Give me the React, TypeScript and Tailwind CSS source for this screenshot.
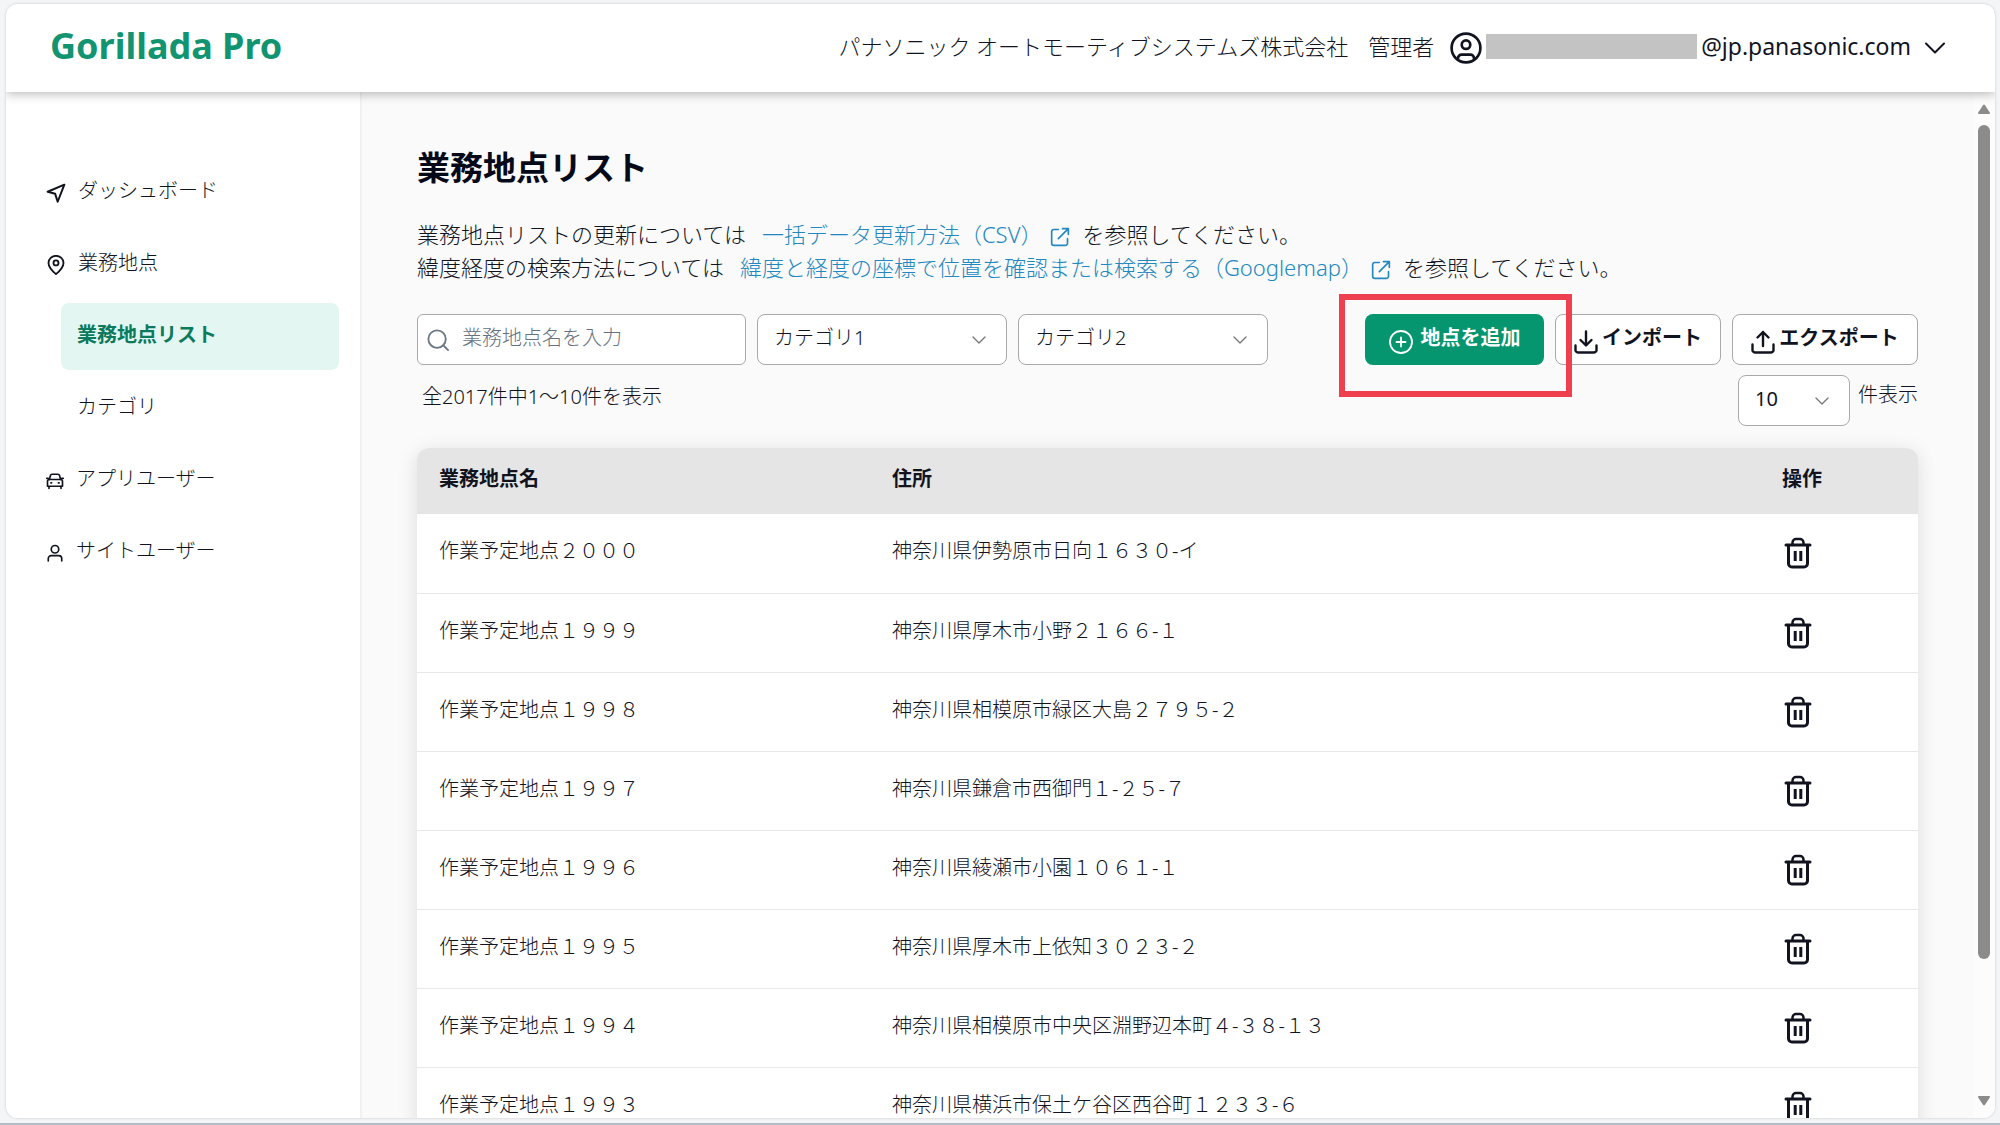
import type { ReactNode } from "react";

type IconProps = { className?: string };

function Svg({ className, children, width = 2 }: IconProps & { children: ReactNode; width?: number }) {
  return (
    <svg
      className={className}
      viewBox="0 0 24 24"
      fill="none"
      stroke="currentColor"
      strokeWidth={width}
      strokeLinecap="round"
      strokeLinejoin="round"
      aria-hidden="true"
    >
      {children}
    </svg>
  );
}

const PlaneIcon = ({ className }: IconProps) => (
  <Svg className={className} width={2.4}>
    <path d="M22 2 2 10.5 11 13 14 22.5Z" />
  </Svg>
);

const PinIcon = ({ className }: IconProps) => (
  <Svg className={className} width={2.2}>
    <path d="M21 9.5C21 15 16 19.500 12 23 8 19.500 3 15 3 9.500a9 8.500 0 0 1 18 0Z" />
    <circle cx="12" cy="9.500" r="3" />
  </Svg>
);

const CarIcon = ({ className }: IconProps) => (
  <Svg className={className} width={2.2}>
    <path d="M4.500 10 6 4.500Q6.500 3 8 3h8q1.500 0 2 1.500L19.500 10" />
    <path d="M2 19v-6.500Q2 10 4.500 10h15q2.500 0 2.500 2.500V19Z" />
    <path d="M4 19.500V22M20 19.500V22M1 8.500h2M21 8.500h2" />
    <path d="M6.500 14.500h1M16.500 14.500h1" />
  </Svg>
);

const PersonIcon = ({ className }: IconProps) => (
  <Svg className={className} width={2.2}>
    <circle cx="12" cy="7" r="5" />
    <path d="M3 22.500v-3a4 4 0 0 1 4-4h10a4 4 0 0 1 4 4v3" />
  </Svg>
);

const AccountIcon = ({ className }: IconProps) => (
  <Svg className={className}>
    <circle cx="12" cy="12" r="10.800" />
    <circle cx="12" cy="9.500" r="3.200" />
    <path d="M6 20.500v-.8A2.700 2.700 0 0 1 8.700 17h6.600a2.700 2.700 0 0 1 2.700 2.700v.8" />
  </Svg>
);

const SearchIcon = ({ className }: IconProps) => (
  <Svg className={className}>
    <circle cx="11" cy="11" r="9.500" />
    <path d="m18 18 5 5" />
  </Svg>
);

const ChevronIcon = ({ className }: IconProps) => (
  <Svg className={className}>
    <path d="m3 7.500 9 9 9-9" />
  </Svg>
);

const ExternalIcon = ({ className }: IconProps) => (
  <Svg className={className}>
    <path d="M10 3H4.500A2.500 2.500 0 0 0 2 5.500v14A2.500 2.500 0 0 0 4.500 22h14a2.500 2.500 0 0 0 2.500-2.500V14" />
    <path d="M15 2h7v7M22 2 10 14" />
  </Svg>
);

const PlusCircleIcon = ({ className }: IconProps) => (
  <Svg className={className} width={1.800}>
    <circle cx="12" cy="12" r="11" />
    <path d="M12 7.500v9M7.500 12h9" />
  </Svg>
);

const ImportIcon = ({ className }: IconProps) => (
  <Svg className={className} width={2.400}>
    <path d="M12 1.500V15M6.500 10l5.500 5.500 5.500-5.500" />
    <path d="M1.500 15.500v4A2.500 2.500 0 0 0 4 22.500h16a2.500 2.500 0 0 0 2.500-3v-4" />
  </Svg>
);

const ExportIcon = ({ className }: IconProps) => (
  <Svg className={className} width={2.400}>
    <path d="M12 16V2M6.500 7.500 12 2l5.500 5.500" />
    <path d="M1.500 14.500v5A2.500 2.500 0 0 0 4 22.500h16a2.500 2.500 0 0 0 2.500-3v-5" />
  </Svg>
);

function TrashIcon() {
  return (
    <svg
      className="h-8 w-7"
      viewBox="0 0 28 32"
      fill="none"
      stroke="currentColor"
      strokeWidth="3"
      strokeLinecap="round"
      strokeLinejoin="round"
      aria-hidden="true"
    >
      <path d="M2 8h24M4.500 8v18.500A3.500 3.500 0 0 0 8 30h12a3.500 3.500 0 0 0 3.500-3.500V8" />
      <path d="M8.500 7.500V5.500A3.500 3.500 0 0 1 12 2h4a3.500 3.500 0 0 1 3.500 3.500v2" strokeWidth="2.500" />
      <path d="M11.200 14v10M16.800 14v10" strokeLinecap="butt" strokeWidth="3" />
    </svg>
  );
}

function NavItem({
  label,
  icon,
  active = false,
}: {
  label: string;
  icon?: ReactNode;
  active?: boolean;
}) {
  return (
    <li>
      <a
        href="#"
        aria-current={active ? "page" : undefined}
        className={
          active
            ? "flex h-[67px] items-center rounded-lg bg-[#e3f6f2] pb-1 pl-4 font-bold text-[#0c7a5c]"
            : icon
              ? "flex h-[67px] items-center gap-3 pl-10"
              : "flex h-[67px] items-center pb-1 pl-4"
        }
      >
        {icon}
        <span className={icon ? "pb-1" : ""}>{label}</span>
      </a>
    </li>
  );
}

function SelectBox({ label, options, className }: { label: string; options: string[]; className: string }) {
  return (
    <div className={className}>
      <select
        aria-label={label}
        className="h-[51px] w-full appearance-none rounded-lg border border-[#a9a9a9] bg-white pr-10 pb-1 pl-4"
      >
        {options.map((option) => (
          <option key={option}>{option}</option>
        ))}
      </select>
      <ChevronIcon className="pointer-events-none absolute top-1/2 right-5 size-4 -translate-y-1/2 text-[#777777]" />
    </div>
  );
}

function DocLink({ children }: { children: ReactNode }) {
  return (
    <a href="#" className="mr-3 ml-4 inline-flex items-center gap-2 text-[#2488c0]">
      {children}
      <ExternalIcon className="mt-1 size-5" />
    </a>
  );
}

const rows = [
  ["作業予定地点２０００", "神奈川県伊勢原市日向１６３０-イ"],
  ["作業予定地点１９９９", "神奈川県厚木市小野２１６６-１"],
  ["作業予定地点１９９８", "神奈川県相模原市緑区大島２７９５-２"],
  ["作業予定地点１９９７", "神奈川県鎌倉市西御門１-２５-７"],
  ["作業予定地点１９９６", "神奈川県綾瀬市小園１０６１-１"],
  ["作業予定地点１９９５", "神奈川県厚木市上依知３０２３-２"],
  ["作業予定地点１９９４", "神奈川県相模原市中央区淵野辺本町４-３８-１３"],
  ["作業予定地点１９９３", "神奈川県横浜市保土ケ谷区西谷町１２３３-６"],
];

function Header() {
  return (
    <header className="relative z-10 flex h-[88px] shrink-0 items-center justify-between bg-white pr-12 pb-1 pl-11 shadow-[0_2px_10px_rgba(0,0,0,0.28)]">
      <a href="#" className="text-[36px] leading-10 font-bold text-[#129471]">
        Gorillada Pro
      </a>
      <div className="flex items-center text-[22px] leading-8">
        <span>パナソニック オートモーティブシステムズ株式会社</span>
        <span className="ml-5">管理者</span>
        <button type="button" aria-label="アカウントメニュー" className="ml-4 flex items-center">
          <AccountIcon className="mt-1 size-8" />
          <span className="ml-1 h-[25px] w-[211px] bg-[#c3c3c3]" />
          <span className="ml-1 text-[23px] font-normal">@jp.panasonic.com</span>
          <ChevronIcon className="mt-1 ml-3 size-6" />
        </button>
      </div>
    </header>
  );
}

function Sidebar() {
  return (
    <nav aria-label="メイン" className="w-[356px] shrink-0 border-r-2 border-[#f1f1f1] bg-white pt-[67px] pr-[21px]">
      <ul className="flex flex-col gap-[5px]">
        <NavItem label="ダッシュボード" icon={<PlaneIcon className="size-5" />} />
        <NavItem label="業務地点" icon={<PinIcon className="size-5" />} />
        <li>
          <ul className="ml-[55px] flex flex-col gap-[5px]">
            <NavItem label="業務地点リスト" active />
            <NavItem label="カテゴリ" />
          </ul>
        </li>
        <NavItem label="アプリユーザー" icon={<CarIcon className="size-[18px]" />} />
        <NavItem label="サイトユーザー" icon={<PersonIcon className="size-[18px]" />} />
      </ul>
    </nav>
  );
}

function Toolbar() {
  return (
    <div className="mt-[30px] flex gap-[11px]">
      <label className="relative w-[329px]">
        <SearchIcon className="absolute top-[15px] left-[10px] size-[22px] text-[#6b7785]" />
        <input
          type="text"
          aria-label="業務地点名"
          placeholder="業務地点名を入力"
          className="h-[51px] w-full rounded-md border border-[#a9a9a9] bg-white pr-3 pb-1 pl-11 placeholder:text-[#66717f]"
        />
      </label>
      <SelectBox label="カテゴリ1" options={["カテゴリ1"]} className="relative w-[250px]" />
      <SelectBox label="カテゴリ2" options={["カテゴリ2"]} className="relative w-[250px]" />
      <div className="relative ml-auto">
        <button
          type="button"
          className="flex h-[51px] w-[179px] items-center justify-center gap-2 rounded-lg bg-[#05966f] font-bold text-white"
        >
          <PlusCircleIcon className="mt-1 size-6" />
          <span className="pb-1">地点を追加</span>
        </button>
        <span className="pointer-events-none absolute -top-5 -right-7 -bottom-8 -left-[26px] z-10 border-[6px] border-[#ef404f]" />
      </div>
      <button
        type="button"
        className="flex h-[51px] w-[166px] items-center justify-center gap-1 rounded-lg border border-[#a9a9a9] bg-white font-bold"
      >
        <ImportIcon className="mt-1 size-6" />
        <span className="pb-1">インポート</span>
      </button>
      <button
        type="button"
        className="flex h-[51px] w-[186px] items-center justify-center gap-1 rounded-lg border border-[#a9a9a9] bg-white font-bold"
      >
        <ExportIcon className="mt-1 size-6" />
        <span className="pb-1">エクスポート</span>
      </button>
    </div>
  );
}

function PlacesTable() {
  return (
    <div className="mt-[22px] shrink-0 overflow-hidden rounded-t-xl bg-white shadow-[0_4px_20px_rgba(0,0,0,0.12)]">
      <table className="w-full table-fixed border-collapse text-left">
        <colgroup>
          <col className="w-[453px]" />
          <col />
          <col className="w-[160px]" />
        </colgroup>
        <thead>
          <tr className="h-[66px] bg-[#e5e5e5]">
            <th className="pb-1 pl-[22px]">業務地点名</th>
            <th className="pb-1 pl-[22px]">住所</th>
            <th className="pb-1 pl-6">操作</th>
          </tr>
        </thead>
        <tbody>
          {rows.map(([name, address]) => (
            <tr key={name} className="h-[79px] border-b border-[#e8e8e8]">
              <td className="pb-1 pl-[22px]">{name}</td>
              <td className="pb-1 pl-[22px]">{address}</td>
              <td className="pl-[26px]">
                <button type="button" aria-label={`${name}を削除`} className="block">
                  <TrashIcon />
                </button>
              </td>
            </tr>
          ))}
        </tbody>
      </table>
    </div>
  );
}

function Scrollbar() {
  return (
    <div aria-hidden="true" className="flex w-[22px] shrink-0 flex-col items-center bg-[#fcfcfc] pt-3 pb-3 text-[#8b8b8b]">
      <svg className="h-[10px] w-3" viewBox="0 0 12 10" fill="currentColor">
        <path d="M5 1.200a1.200 1.200 0 0 1 2 0l4.800 7.300a1 1 0 0 1-.8 1.500H1a1 1 0 0 1-.8-1.500Z" />
      </svg>
      <div className="mt-[11px] mb-3 w-3 flex-1">
        <div className="h-[87%] rounded-full bg-[#8b8b8b]" />
      </div>
      <svg className="h-[10px] w-3" viewBox="0 0 12 10" fill="currentColor">
        <path d="M5 8.800a1.200 1.200 0 0 0 2 0l4.800-7.300A1 1 0 0 0 11 0H1a1 1 0 0 0-.8 1.500Z" />
      </svg>
    </div>
  );
}

export default function App() {
  return (
    <div className="flex h-screen flex-col border-b-2 border-[#b4bbc5] bg-[#f4f5f6] pt-1 pr-[5px] pb-[5px] pl-[6px] font-['Noto_Sans','Noto_Sans_CJK_JP',sans-serif] text-[20px] leading-7 font-light text-[#11141f]">
      <div className="flex min-h-0 flex-1 flex-col overflow-hidden rounded-xl bg-[#fafafa] shadow-[0_0_3px_rgba(0,0,0,0.18)]">
        <Header />
        <div className="flex min-h-0 flex-1">
          <Sidebar />
          <main className="flex min-w-0 flex-1 flex-col overflow-hidden pt-[52px] pr-[55px] pl-[55px]">
            <h1 className="text-[33px] leading-12 font-bold text-[#060a18]">業務地点リスト</h1>
            <div className="mt-[26px] text-[22px] leading-[33px]">
              <p className="flex items-center">
                業務地点リストの更新については
                <DocLink>一括データ更新方法（CSV）</DocLink>
                を参照してください。
              </p>
              <p className="flex items-center">
                緯度経度の検索方法については
                <DocLink>緯度と経度の座標で位置を確認または検索する（Googlemap）</DocLink>
                を参照してください。
              </p>
            </div>
            <Toolbar />
            <div className="mt-[10px] flex items-start justify-between">
              <p className="mt-2 pl-[5px]">全2017件中1～10件を表示</p>
              <label className="flex gap-2">
                <SelectBox label="表示件数" options={["10"]} className="relative w-[112px] font-normal" />
                <span className="mt-[6px]">件表示</span>
              </label>
            </div>
            <PlacesTable />
          </main>
          <Scrollbar />
        </div>
      </div>
    </div>
  );
}
